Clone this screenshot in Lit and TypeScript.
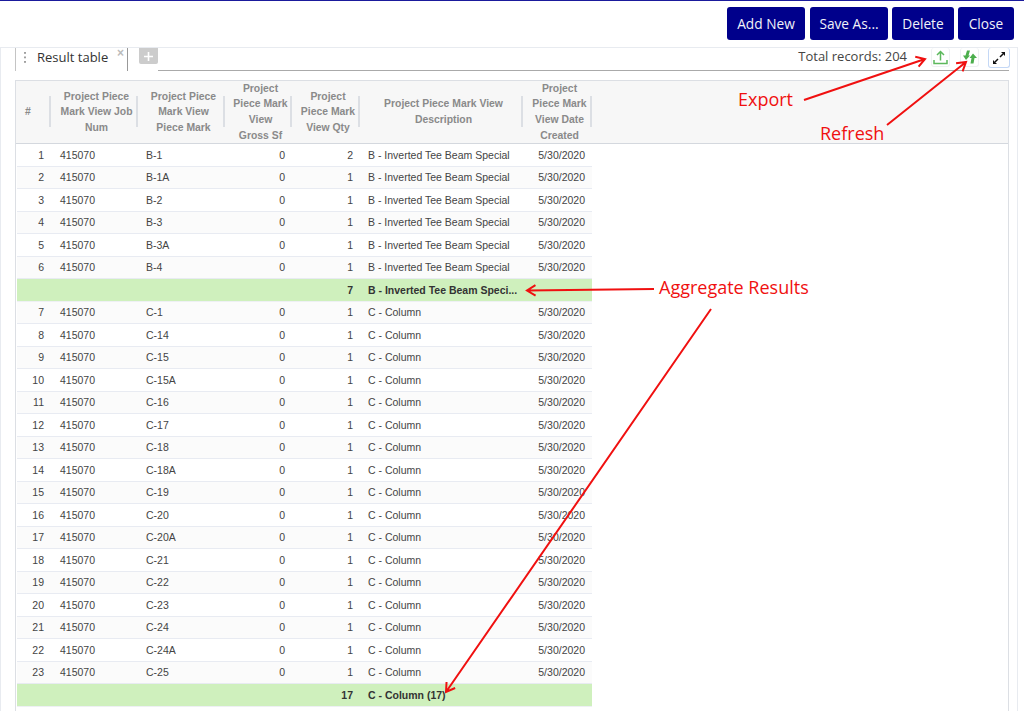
import { LitElement, html, css, svg } from "lit";
import { customElement } from "lit/decorators.js";

const HEAD = [
  "#",
  html`Project Piece<br />Mark View Job<br />Num`,
  html`Project Piece<br />Mark View<br />Piece Mark`,
  html`Project<br />Piece Mark<br />View<br />Gross Sf`,
  html`Project<br />Piece Mark<br />View Qty`,
  html`Project Piece Mark View<br />Description`,
  html`Project<br />Piece Mark<br />View Date<br />Created`,
];
const B = ["B-1", "B-1A", "B-2", "B-3", "B-3A", "B-4"];
const BQ = [2, 1, 1, 1, 1, 1];
const C = ["C-1", "C-14", "C-15", "C-15A", "C-16", "C-17", "C-18", "C-18A", "C-19", "C-20", "C-20A", "C-21", "C-22", "C-23", "C-24", "C-24A", "C-25"];
const BT = "B - Inverted Tee Beam Special";
const CT = "C - Column";

type Row = { n?: number; mark?: string; qty: number; desc: string; agg?: boolean };
const rows: Row[] = [
  ...B.map((mark, i) => ({ n: i + 1, mark, qty: BQ[i], desc: BT })),
  { qty: 7, desc: "B - Inverted Tee Beam Speci...", agg: true },
  ...C.map((mark, i) => ({ n: i + 7, mark, qty: 1, desc: CT })),
  { qty: 17, desc: "C - Column (17)", agg: true },
];

@customElement("app-root")
export class AppRoot extends LitElement {
  static styles = css`
    :host {
      display: block;
      position: relative;
      height: 711px;
      overflow: hidden;
      background: #fff;
      font-family: "Liberation Sans", Arial, sans-serif;
    }
    .topbar {
      height: 47px;
      box-sizing: border-box;
      border-top: 1px solid #1a1a9c;
      display: flex;
      justify-content: flex-end;
      gap: 4px;
      padding: 6px 10px 0 0;
    }
    .btn {
      height: 33px;
      background: #00008b;
      color: #f2f2f8;
      border: 0;
      border-radius: 3px;
      font: 13.7px "Open Sans", "Noto Sans", sans-serif;
      padding: 0;
    }
    .w78 { width: 78px; }
    .first { margin-right: 1px; }
    .w62 { width: 62px; }
    .w56 { width: 56px; }
    .panel {
      height: 664px;
      box-sizing: border-box;
      margin-right: 6px;
      border-top: 1px solid #e8ebf0;
      border-left: 1px solid #e8ebf0;
      border-right: 1px solid #e8ebf0;
      padding: 0 8px 0 14px;
    }
    .tabbar {
      height: 23px;
      display: flex;
      align-items: flex-start;
    }
    .tab {
      width: 113px;
      height: 23px;
      box-sizing: border-box;
      position: relative;
      border-left: 1px solid #c4c4c4;
      border-right: 1px solid #999;
      display: flex;
      align-items: center;
      color: #333;
      font: 13px "Open Sans", "Noto Sans", sans-serif;
      padding: 0 0 5px 21px;
    }
    .grip {
      position: absolute;
      left: 8px;
      top: 4px;
      width: 2px;
      height: 13px;
      background: radial-gradient(circle at 1px 1px, #a0a0a0 1px, transparent 1.3px) 0 0 / 2px 4.5px;
    }
    .x {
      position: absolute;
      right: 3px;
      top: -2px;
      color: #bbb;
      font: bold 12px "Liberation Sans", sans-serif;
    }
    .add {
      width: 19px;
      height: 16px;
      margin-left: 11px;
      background: #ccc;
      border-radius: 0 0 2px 2px;
      display: flex;
      align-items: center;
      justify-content: center;
    }
    .rest {
      flex: 1;
      height: 23px;
      box-sizing: border-box;
      border-bottom: 1px solid #aaa;
      display: flex;
      justify-content: flex-end;
      align-items: flex-start;
      color: #444;
      font: 13px "Open Sans", "Noto Sans", sans-serif;
    }
    .total { margin: 0 24px 0 0; line-height: 17px; }
    .ico {
      width: 19px;
      height: 19px;
      box-sizing: border-box;
      border: 1px solid #eef0f2;
      border-top: 0;
      border-radius: 3px;
      background: #fff;
      display: flex;
      align-items: center;
      justify-content: center;
      margin-right: 10px;
    }
    .ico.fs {
      width: 22px;
      height: 20px;
      margin: 0 -1px 0 -1px;
      border: 1px solid #c4d8f6;
      border-top: 0;
    }
    .table {
      margin-top: 9px;
      border: 1px solid #dcdfe4;
      border-bottom: 0;
      height: 640px;
      font-size: 10.5px;
      color: #444;
    }
    .head, .row {
      display: grid;
      grid-template-columns: 34px 87px 87px 67px 68px 163px 69px;
      width: 575px;
      margin-left: 1px;
    }
    .headwrap {
      background: #f7f7f7;
      border-bottom: 1px solid #d4d8de;
      height: 62px;
    }
    .th {
      position: relative;
      display: flex;
      align-items: center;
      justify-content: center;
      text-align: center;
      height: 62px;
      box-sizing: border-box;
      padding-left: 4px;
      font-weight: bold;
      font-size: 10.4px;
      color: #8a8a8a;
      line-height: 15.6px;
    }
    .th.hash { padding: 0 12px 0 0; }
    .th::after {
      content: "";
      position: absolute;
      right: 0;
      top: 15px;
      height: 31px;
      width: 2px;
      background: #dcdfe4;
    }
    .row {
      height: 22.5px;
      box-sizing: border-box;
      border-bottom: 1px solid #e8ebf2;
      background: #fff;
      align-items: center;
    }
    .row.alt { background: #fbfbfb; }
    .row.agg {
      background: #cff0bd;
      font-weight: bold;
      color: #333;
      border-bottom-color: #eef0f4;
    }
    .c { padding: 0 7px 0 8px; white-space: nowrap; overflow: hidden; }
    .c.job { padding-left: 9px; }
    .r { text-align: right; }
    .overlay {
      position: absolute;
      left: 0;
      top: 0;
      width: 1024px;
      height: 711px;
      pointer-events: none;
    }
    .note {
      fill: #f01010;
      font: 18px "Open Sans", "Noto Sans", sans-serif;
    }
  `;

  private arrow(x1: number, y1: number, x2: number, y2: number) {
    const a = Math.atan2(y2 - y1, x2 - x1);
    const L = 10;
    const p = (d: number) => `${x2 - L * Math.cos(a + d)},${y2 - L * Math.sin(a + d)}`;
    return svg`<path d="M${x1} ${y1}L${x2} ${y2}M${p(0.55)}L${x2} ${y2}L${p(-0.55)}" fill="none" stroke="#f01010" stroke-width="2"/>`;
  }

  render() {
    return html`
      <div class="topbar">
        <button class="btn w78 first">Add New</button>
        <button class="btn w78">Save As...</button>
        <button class="btn w62">Delete</button>
        <button class="btn w56">Close</button>
      </div>
      <div class="panel">
        <div class="tabbar">
          <div class="tab"><span class="grip"></span>Result table<span class="x">×</span></div>
          <div class="add">
            <svg width="11" height="11" viewBox="0 0 11 11"><path d="M5.5 1v9M1 5.5h9" stroke="#fff" stroke-width="1.6" /></svg>
          </div>
          <div class="rest">
            <span class="total">Total records: 204</span>
            <span class="ico">
              <svg width="15" height="15" viewBox="0 0 15 15" fill="none" stroke="#5cb85c" stroke-width="1.5"><path d="M7.5 10.5V2M4 5l3.5-3.5L11 5M1 10v3.5h13V10" /></svg>
            </span>
            <span class="ico">
              <svg width="15" height="15" viewBox="0 0 15 15" fill="#4cae4c"><path d="M5 .5H8L6.5 5.5H8L4 10 1 5.5H3.5zM11 3.5 15 8H12.5L11.5 13.5H8.5L9.5 8H7.5z" /></svg>
            </span>
            <span class="ico fs">
              <svg width="14" height="14" viewBox="0 0 14 14" fill="#111"><path d="M9 1h4v4zM5 13H1V9z" /><path d="M11 3 8 6M3 11 6 8" stroke="#111" stroke-width="1.5" fill="none" /></svg>
            </span>
          </div>
        </div>
        <div class="table">
          <div class="headwrap">
            <div class="head">
              ${HEAD.map((h, i) => html`<div class="th ${i === 0 ? "hash" : ""}">${h}</div>`)}
            </div>
          </div>
          ${rows.map(
            (r, i) => html`
              <div class="row ${r.agg ? "agg" : i % 2 ? "alt" : ""}">
                <div class="c r">${r.n ?? ""}</div>
                <div class="c job">${r.agg ? "" : "415070"}</div>
                <div class="c">${r.mark ?? ""}</div>
                <div class="c r">${r.agg ? "" : "0"}</div>
                <div class="c r">${r.qty}</div>
                <div class="c">${r.desc}</div>
                <div class="c r">${r.agg ? "" : "5/30/2020"}</div>
              </div>
            `
          )}
        </div>
      </div>
      <svg class="overlay" viewBox="0 0 1024 711">
        <text class="note" x="738" y="106">Export</text>
        <text class="note" x="820" y="140">Refresh</text>
        <text class="note" x="659" y="294">Aggregate Results</text>
        ${this.arrow(804, 100, 925, 59)}
        ${this.arrow(887, 125, 966, 62)}
        ${this.arrow(654, 289, 527, 290.5)}
        ${this.arrow(711, 309, 446, 692)}
      </svg>
    `;
  }
}
